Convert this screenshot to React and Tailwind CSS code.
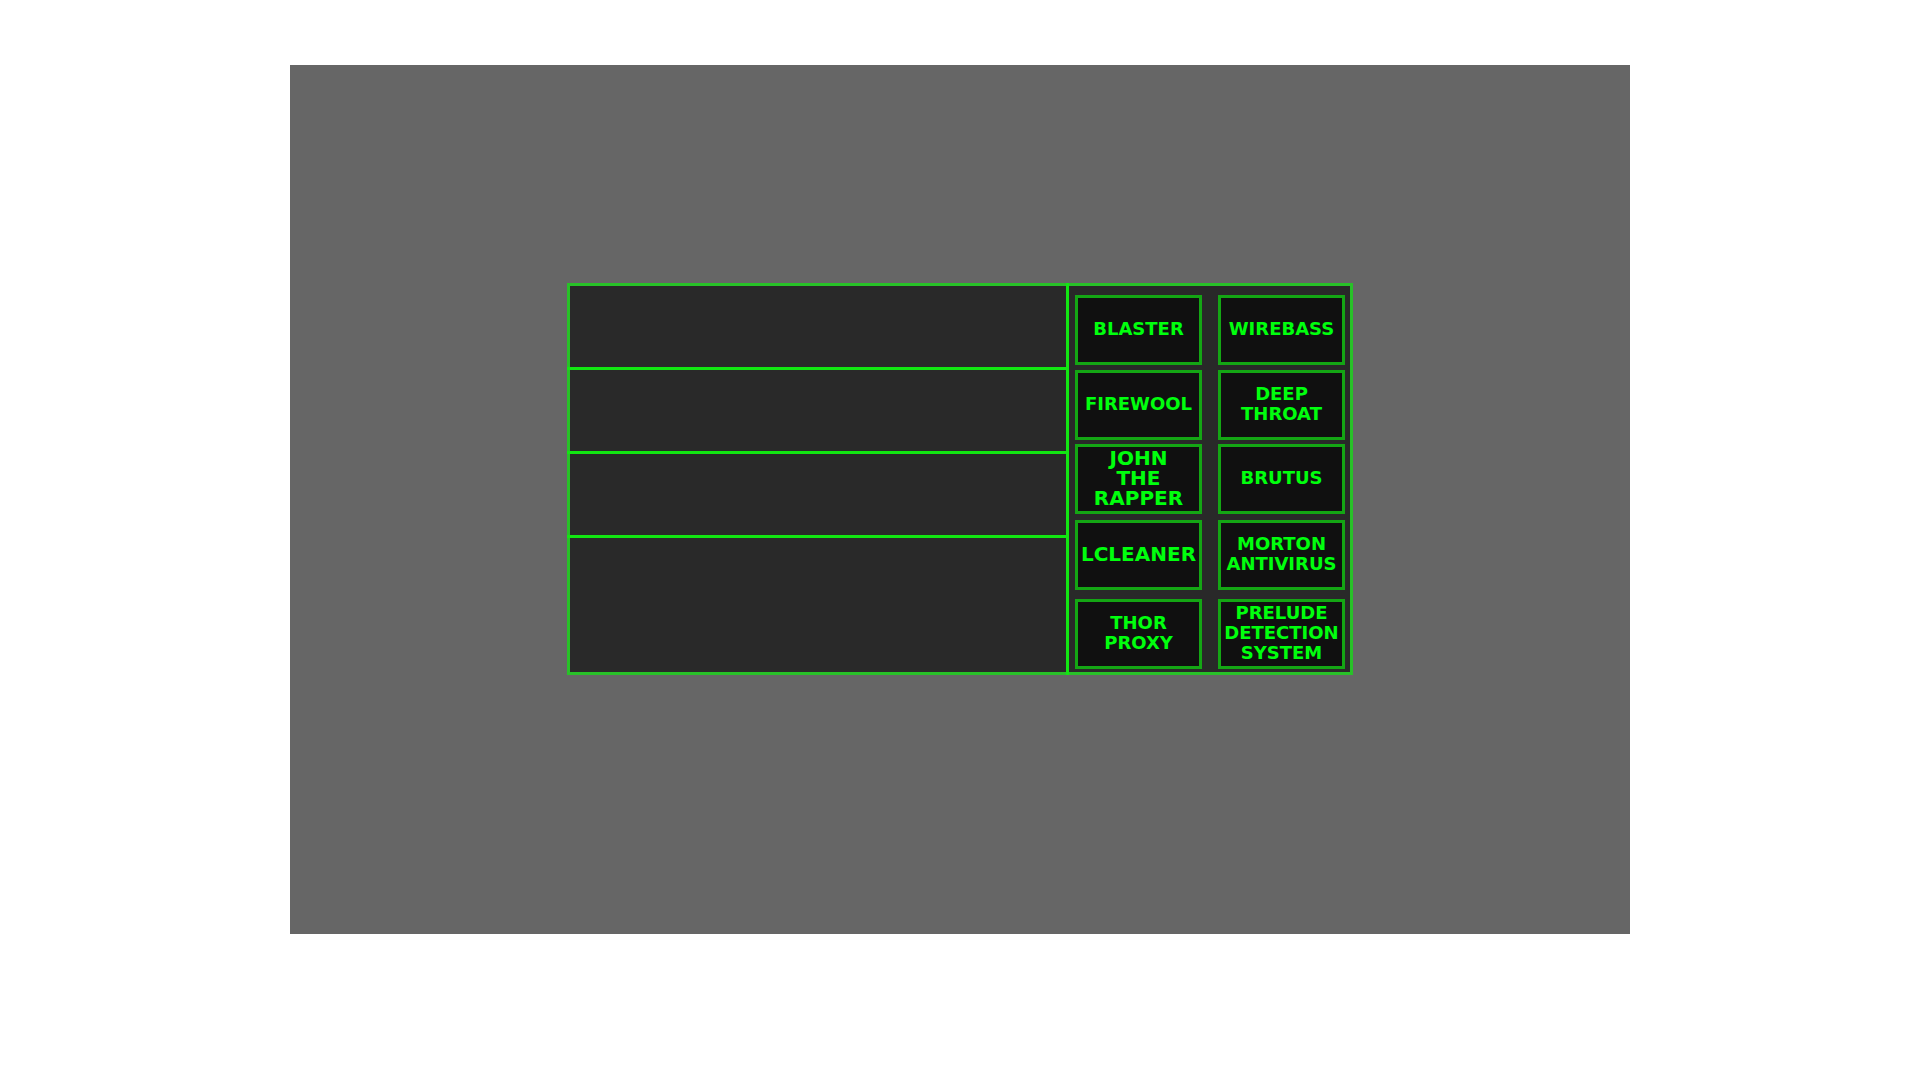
const slots = ["h-[81px]", "h-[81px]", "h-[81px]", "h-[134px]"];

const rows = [
  { gap: "mt-[9px]", items: [{ lines: ["BLASTER"] }, { lines: ["WIREBASS"] }] },
  { gap: "mt-[5px]", items: [{ lines: ["FIREWOOL"] }, { lines: ["DEEP", "THROAT"] }] },
  { gap: "mt-[4px]", items: [{ lines: ["JOHN", "THE", "RAPPER"], large: true }, { lines: ["BRUTUS"] }] },
  { gap: "mt-[6px]", items: [{ lines: ["LCLEANER"], large: true }, { lines: ["MORTON", "ANTIVIRUS"] }] },
  { gap: "mt-[9px]", items: [{ lines: ["THOR", "PROXY"] }, { lines: ["PRELUDE", "DETECTION", "SYSTEM"] }] },
];

function ToolButton({ lines, large }) {
  return (
    <button
      type="button"
      className={`flex h-[70px] min-w-0 flex-1 flex-col items-center justify-center border-[3px] border-[#14a614] bg-[#101010] pb-[2px] font-bold leading-[20px] whitespace-nowrap text-[#00ff0d] ${
        large ? "text-[20px]" : "text-[18px]"
      }`}
    >
      {lines.map((line) => (
        <span key={line}>{line}</span>
      ))}
    </button>
  );
}

export default function App() {
  return (
    <div className="min-h-screen bg-white pt-[65px] font-['DejaVu_Sans',sans-serif]">
      <main className="mx-auto w-full max-w-[1340px] bg-[#666666] pt-[218px] pb-[259px]">
        <div className="mx-auto flex w-full max-w-[786px] bg-[#292929]">
          <section aria-label="Slots" className="flex-1 border-y-[3px] border-[#28c128]">
            {slots.map((height, i) => (
              <div key={i}>
                {i > 0 && <hr className="h-[3px] border-0 bg-[#12e612]" />}
                <div className={`border-l-[3px] border-[#28c128] ${height}`} />
              </div>
            ))}
          </section>
          <div className="w-[3px] bg-[#12e612]" />
          <section
            aria-label="Tools"
            className="w-[284px] border-y-[3px] border-r-[3px] border-[#28c128] pr-[5px] pl-[6px]"
          >
            {rows.map(({ gap, items }) => (
              <div key={items[0].lines[0]} className={`flex gap-4 ${gap}`}>
                {items.map((item) => (
                  <ToolButton key={item.lines[0]} {...item} />
                ))}
              </div>
            ))}
          </section>
        </div>
      </main>
    </div>
  );
}
